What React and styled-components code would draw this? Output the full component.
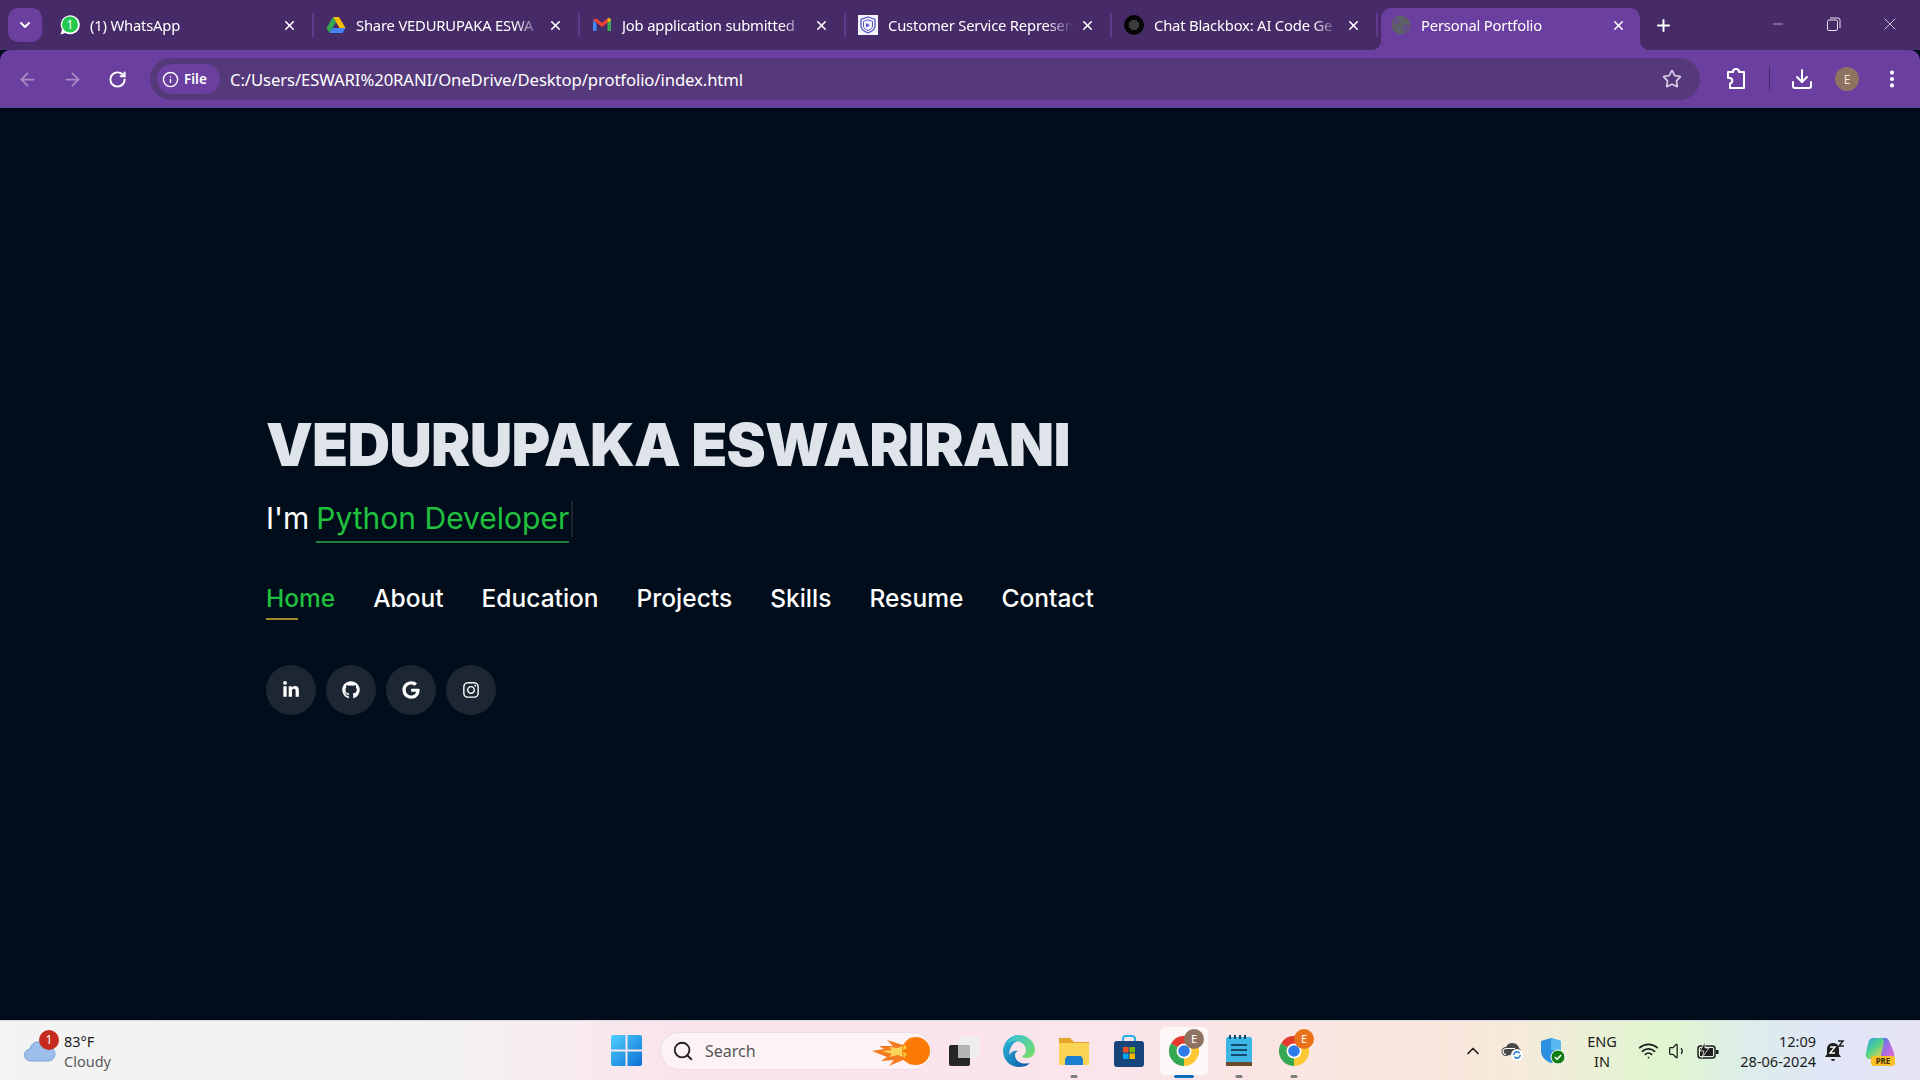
import { createGlobalStyle, styled } from 'styled-components';
import {
  ArrowLeft, ArrowRight, RotateCw, Info, Star, Download, EllipsisVertical, X, Plus, Minus,
  ChevronDown, ChevronUp, Search, Wifi, Volume1,
} from 'lucide-react';
import { FaLinkedinIn, FaGithub, FaGoogle, FaInstagram } from 'react-icons/fa';

const GlobalStyle = createGlobalStyle`
  * { box-sizing: border-box; }
  html, body { margin: 0; padding: 0; height: 100%; overflow: hidden; }
  body { background: #010d1b; font-family: "Noto Sans", "Open Sans", sans-serif; }
`;

const Screen = styled.div`
  width: 1920px;
  height: 1080px;
  display: flex;
  flex-direction: column;
  overflow: hidden;
`;

/* browser chrome */
const TabStrip = styled.div`
  height: 50px;
  background: #472b68;
  display: flex;
  align-items: flex-end;
  padding-left: 8px;
  color: #fff;
`;

const TabSearch = styled.div`
  width: 34px;
  height: 34px;
  margin-bottom: 8px;
  margin-right: 6px;
  border-radius: 10px;
  background: #6b3fa0;
  display: flex;
  align-items: center;
  justify-content: center;
`;

const Tab = styled.div`
  width: 266px;
  height: 42px;
  display: flex;
  align-items: center;
  padding-left: 12px;
  padding-bottom: 8px;
`;

const ActiveTab = styled.div`
  position: relative;
  width: 259px;
  height: 42px;
  margin-left: 3px;
  padding-left: 10px;
  padding-bottom: 8px;
  display: flex;
  align-items: center;
  background: #6b3fa0;
  border-radius: 10px 10px 0 0;

  &::before, &::after {
    content: "";
    position: absolute;
    bottom: 0;
    width: 10px;
    height: 10px;
  }
  &::before {
    left: -10px;
    background: radial-gradient(circle at 0 0, transparent 10px, #6b3fa0 10.5px);
  }
  &::after {
    right: -10px;
    background: radial-gradient(circle at 100% 0, transparent 10px, #6b3fa0 10.5px);
  }
`;

const Favicon = styled.div`
  width: 20px;
  height: 20px;
  flex: none;
  display: flex;
  align-items: center;
  justify-content: center;
`;

const TabTitle = styled.span`
  flex: 1;
  min-width: 0;
  margin-left: 10px;
  font-size: 14.8px;
  letter-spacing: -0.2px;
  white-space: nowrap;
  overflow: hidden;
  mask-image: linear-gradient(to right, #000 86%, transparent 100%);
`;

const TabClose = styled.div`
  width: 20px;
  height: 20px;
  flex: none;
  margin-left: 4px;
  margin-right: ${(p) => p.$right}px;
  display: flex;
  align-items: center;
  justify-content: center;
`;

const TabDivider = styled.div`
  width: 2px;
  height: 24px;
  flex: none;
  background: #5f3a8f;
`;

const NewTab = styled.div`
  margin-left: 14px;
  height: 42px;
  padding-bottom: 8px;
  display: flex;
  align-items: center;
`;

const WindowControls = styled.div`
  margin-left: auto;
  height: 50px;
  display: flex;
  align-items: center;
  padding-right: 2px;
  padding-bottom: 2px;
`;

const WindowButton = styled.div`
  width: 56px;
  display: flex;
  justify-content: center;
  color: #e8e0f0;
`;

const ToolBar = styled.div`
  height: 58px;
  background: #6b3fa0;
  border-radius: 10px 10px 0 0;
  border-bottom: 1px solid #4f4a8c;
  display: flex;
  align-items: center;
  padding-left: 9px;
  padding-top: 1px;
  color: #fff;
`;

const NavIcon = styled.div`
  width: 36px;
  height: 36px;
  margin-right: ${(p) => p.$gap || 9}px;
  display: flex;
  align-items: center;
  justify-content: center;
  color: ${(p) => (p.$dim ? '#a68fc4' : '#fff')};
`;

const Omnibox = styled.div`
  width: 1550px;
  height: 42px;
  margin-left: 6px;
  border-radius: 21px;
  background: #56397a;
  display: flex;
  align-items: center;
  padding: 0 18px 0 7px;
`;

const FileChip = styled.div`
  height: 30px;
  width: 63px;
  border-radius: 15px;
  background: #6b3fa0;
  display: flex;
  align-items: center;
  gap: 5px;
  padding-left: 5px;
  font-size: 13.5px;
  font-weight: 600;
`;

const Url = styled.span`
  margin-left: 10px;
  font-size: 16.7px;
  letter-spacing: -0.1px;
  flex: 1;
`;

const ToolDivider = styled.div`
  width: 1px;
  height: 24px;
  background: #472b68;
  margin: 0 20px 0 21px;
`;

const ToolIcons = styled.div`
  display: flex;
  align-items: center;
  margin-left: 24px;
`;

const Avatar = styled.div`
  width: 24px;
  height: 24px;
  margin: 0 22px 0 21px;
  border-radius: 50%;
  background: #8e7460;
  color: #f2e6dc;
  font-size: 12px;
  display: flex;
  align-items: center;
  justify-content: center;
`;

/* portfolio page */
const Hero = styled.main`
  flex: 1;
  background: #010d1b;
  padding: 301px 0 0 266px;
  display: flex;
  flex-direction: column;
  align-items: flex-start;
`;

const Name = styled.h1`
  margin: 0;
  font-family: "Inter", sans-serif;
  font-size: 59px;
  font-weight: 900;
  line-height: 72px;
  color: #dfe3ea;
  letter-spacing: -0.8px;
  white-space: nowrap;
`;

const Role = styled.div`
  margin-top: 16px;
  display: flex;
  font-family: "Inter", sans-serif;
  font-size: 30px;
  line-height: 42px;
  color: #fff;
`;

const Typed = styled.span`
  margin-left: 7px;
  padding-bottom: 2px;
  color: #1fc13f;
  border-bottom: 2px solid #1f7f38;
`;

const Cursor = styled.span`
  width: 2px;
  height: 36px;
  margin: 4px 0 0 2px;
  background: #1b2530;
`;

const NavRow = styled.nav`
  margin-top: 37px;
  display: flex;
  gap: 38px;
`;

const NavLink = styled.a`
  position: relative;
  font-family: "Inter", sans-serif;
  font-size: 24.5px;
  font-weight: 500;
  line-height: 36px;
  color: ${(p) => (p.$active ? '#1fc13f' : '#fff')};

  &::after {
    content: "";
    display: ${(p) => (p.$active ? 'block' : 'none')};
    position: absolute;
    left: 0;
    bottom: -4px;
    width: 32px;
    height: 2px;
    background: #a3872e;
  }
`;

const Socials = styled.div`
  margin-top: 49px;
  display: flex;
  gap: 10px;
`;

const SocialLink = styled.a`
  width: 50px;
  height: 50px;
  border-radius: 50%;
  background: #1c2733;
  color: #fff;
  font-size: 18px;
  display: flex;
  align-items: center;
  justify-content: center;
`;

/* windows taskbar */
const TaskBar = styled.footer`
  height: 60px;
  border-top: 1px solid #d9dbe0;
  background: linear-gradient(90deg, #f3f3f3 0%, #f4f1f2 24%, #fbe3ec 36%, #fbe4ea 58%, #fae6dc 74%, #f6eadc 79%, #dff6cf 87%, #dcedea 91%, #e0e6f6 95%, #e6e4f4 100%);
  display: flex;
  align-items: center;
  color: #1c1c1c;
`;

const Weather = styled.div`
  width: 599px;
  padding-left: 24px;
  display: flex;
  align-items: center;
  gap: 8px;
`;

const WeatherIcon = styled.div`
  position: relative;
  width: 32px;
  height: 36px;
  display: flex;
  align-items: center;
`;

const WeatherBadge = styled.span`
  position: absolute;
  right: -3px;
  top: -3px;
  width: 20px;
  height: 20px;
  border-radius: 50%;
  background: #c42b1c;
  color: #fff;
  font-size: 12px;
  display: flex;
  align-items: center;
  justify-content: center;
`;

const WeatherText = styled.div`
  font-size: 14.5px;
  line-height: 20px;
  & span { display: block; color: #5b5b5b; }
`;

const TaskCell = styled.div`
  position: relative;
  width: 55px;
  height: 60px;
  display: flex;
  align-items: center;
  justify-content: center;
`;

const ActiveBox = styled.div`
  width: 48px;
  height: 48px;
  border-radius: 5px;
  background: rgba(255, 255, 255, 0.7);
  display: flex;
  align-items: center;
  justify-content: center;
`;

const Indicator = styled.span`
  position: absolute;
  left: 50%;
  bottom: 3px;
  width: ${(p) => (p.$active ? 20 : 7)}px;
  height: 3px;
  transform: translateX(-50%);
  border-radius: 2px;
  background: ${(p) => (p.$active ? '#0f6cbd' : '#7d7d7d')};
`;

const CornerBadge = styled.span`
  position: absolute;
  right: 7px;
  top: 8px;
  width: 20px;
  height: 20px;
  border-radius: 50%;
  background: ${(p) => p.$color};
  color: #fff;
  font-size: 11px;
  display: flex;
  align-items: center;
  justify-content: center;
`;

const SearchBox = styled.div`
  width: 272px;
  height: 38px;
  margin: 0 4px 0 6px;
  border-radius: 19px;
  background: #fdf3f6;
  border: 1px solid #eadde2;
  display: flex;
  align-items: center;
  padding-left: 11px;
  font-size: 16px;
  color: #555;
  gap: 11px;
  & svg:last-child { margin-left: auto; margin-right: 1px; }
`;

const Tray = styled.div`
  margin-left: auto;
  padding-right: 14px;
  display: flex;
  align-items: center;
`;

const TrayCell = styled.div`
  width: ${(p) => p.$w}px;
  display: flex;
  align-items: center;
  justify-content: center;
  text-align: center;
  font-size: 14.5px;
  line-height: 20px;
  color: #1c1c1c;
`;

const Clock = styled.div`
  width: 91px;
  text-align: right;
  font-size: 14.5px;
  line-height: 20px;
  white-space: nowrap;
  display: flex;
  flex-direction: column;
  align-items: flex-end;
`;

/* drawn icons */
const Whatsapp = () => (
  <svg width="20" height="20" viewBox="0 0 20 20">
    <path d="M0.500 19.500l1.500-5A9.500 9.500 0 1 1 5.500 18z" fill="#fff" />
    <circle cx="10" cy="9.500" r="8" fill="#25c94f" />
    <text x="10" y="13.800" textAnchor="middle" fontSize="12" fontFamily="Noto Sans" fill="#fff">1</text>
  </svg>
);

const Drive = () => (
  <svg width="20" height="20" viewBox="0 0 20 20">
    <path d="M7 2h6l6.500 11h-6z" fill="#fbbc04" />
    <path d="M7 2L.5 13l3 5L10 7z" fill="#34a853" />
    <path d="M3.500 18h13l3-5H6.500z" fill="#4285f4" />
  </svg>
);

const Gmail = () => (
  <svg width="20" height="20" viewBox="0 0 20 20">
    <path d="M1 5v11h3.500V8.500z" fill="#4285f4" />
    <path d="M19 5v11h-3.500V8.500z" fill="#34a853" />
    <path d="M1 5l9 7 5.500-4.300V3.500L10 7.700 4 3.200z" fill="#ea4335" />
    <path d="M15.500 3.500V8L19 5.500c0-2-2-3.300-3.500-2z" fill="#fbbc04" />
  </svg>
);

const ShieldMark = () => (
  <svg width="20" height="20" viewBox="0 0 20 20">
    <rect width="20" height="20" fill="#f4f4fb" />
    <path d="M10 2l7 2.500v6.500c0 3-3 5.500-7 7-4-1.500-7-4-7-7V4.500z" fill="none" stroke="#5a55c8" strokeWidth="1.300" />
    <path d="M10 4.800l4.500 1.600v4.600c0 2-2 3.600-4.500 4.600-2.500-1-4.500-2.600-4.500-4.600V6.400z" fill="none" stroke="#5a55c8" strokeWidth="1" />
    <path d="M8 8l4 2.300-4 2.300z" fill="#5a55c8" />
  </svg>
);

const Blackbox = () => (
  <svg width="20" height="20" viewBox="0 0 20 20">
    <circle cx="10" cy="10" r="10" fill="#050505" />
    {[-4, -2, 0, 2, 4].flatMap((x) =>
      [-4, -2, 0, 2, 4].map((y) =>
        x * x + y * y < 22 ? <circle key={`${x}${y}`} cx={10 + x} cy={10 + y} r="0.7" fill="#9b9b9b" /> : null
      )
    )}
  </svg>
);

const Globe = () => (
  <svg width="20" height="20" viewBox="0 0 20 20">
    <circle cx="10" cy="10" r="9.500" fill="#5f5f68" />
    <path d="M5 3c3 1 4 3 2.500 5S3 9 1.500 8M12 10c3-1 6 0 7 2-1 3-3 5-5 6-2-3-3-6-2-8zM12 1c1 2 3 3 6 3" fill="#6b3fa0" opacity=".55" />
  </svg>
);

const Puzzle = () => (
  <svg width="24" height="24" viewBox="0 0 24 24" fill="none" stroke="#fff" strokeWidth="2" strokeLinejoin="round">
    <path d="M4 5h5a3 3 0 0 1 6 0h5v16H6v-4.500a2.800 2.800 0 0 0 0-5.500H4z" />
  </svg>
);

const RestoreIcon = () => (
  <svg width="14" height="14" viewBox="0 0 14 14" fill="none" stroke="#e8e0f0" strokeWidth="1">
    <rect x="0.500" y="3" width="10" height="10.500" rx="1.500" />
    <path d="M3 1h8a2 2 0 0 1 2 2v8" />
  </svg>
);

const Cloud = () => (
  <svg width="32" height="22" viewBox="0 0 32 22">
    <path d="M7 21a6 6 0 0 1-1-12 9 9 0 0 1 17-2 7 7 0 0 1 2 14z" fill="#9dbdea" stroke="#7ea3dc" />
  </svg>
);

const WindowsLogo = () => (
  <svg width="31" height="31" viewBox="0 0 31 31">
    <defs>
      <linearGradient id="win" x1="0" y1="0" x2="1" y2="1">
        <stop offset="0" stopColor="#4fd0fb" />
        <stop offset="1" stopColor="#0a6fd6" />
      </linearGradient>
    </defs>
    <path d="M0 2a2 2 0 0 1 2-2h12.500v14.500H0zM16.500 0H29a2 2 0 0 1 2 2v12.500H16.500zM0 16.500h14.500V31H2a2 2 0 0 1-2-2zM16.500 16.500H31V29a2 2 0 0 1-2 2H16.500z" fill="url(#win)" />
  </svg>
);

const Fire = () => (
  <svg width="58" height="32" viewBox="0 0 58 32">
    <path d="M0 16l12-2-5-3 14 0-6-6 16 5 8-8v28l-8-5-14 6 5-6-13 1 6-4z" fill="#f47a1f" />
    <path d="M10 16l10-1-3-3 9 1 8-4v14l-8-3-9 2 3-3z" fill="#fbd45b" />
    <circle cx="44" cy="16" r="14" fill="#fb7a05" />
    <path d="M38 4l-6 5 3 4-5 3 5 3-3 4 6 5c-5-3-7-7-7-12s2-9 7-12z" fill="#f9c33c" />
  </svg>
);

const TaskView = () => (
  <svg width="30" height="30" viewBox="0 0 30 30">
    <rect x="9" y="1" width="21" height="21" rx="2" fill="#eeeeee" />
    <rect x="0" y="9" width="21" height="21" rx="2" fill="#262626" />
    <rect x="9" y="9" width="12" height="13" fill="#b5b5b5" />
  </svg>
);

const Edge = () => (
  <svg width="32" height="32" viewBox="0 0 32 32">
    <defs>
      <linearGradient id="edgeA" x1="0" y1="0" x2="1" y2="1">
        <stop offset="0" stopColor="#2ebfdc" />
        <stop offset="1" stopColor="#0b53a8" />
      </linearGradient>
      <linearGradient id="edgeB" x1="0" y1="0" x2="1" y2="1">
        <stop offset="0" stopColor="#37c0e0" />
        <stop offset="1" stopColor="#7be05e" />
      </linearGradient>
    </defs>
    <path d="M16 0C7 0 1 7 0 15c0 10 7 17 16 17 4 0 8-1 11-4-7 2-15-1-15-8 0-2 1-3 3-4-4-1-7 1-9 4C7 10 12 6 16 6z" fill="url(#edgeA)" />
    <path d="M16 0c9 0 16 7 16 15 0 5-4 8-8 8-3 0-5-1-5-2 3-1 4-3 4-6 0-5-5-9-11-9-3 0-6 1-8 4C6 4 10 0 16 0z" fill="url(#edgeB)" />
  </svg>
);

const Folder = () => (
  <svg width="32" height="30" viewBox="0 0 32 30">
    <path d="M1 2h11l4 4h15v5H1z" fill="#e5a52a" />
    <path d="M1 7h30v22H1z" fill="#fcd453" />
    <path d="M9 20h14l2 3v6H7v-6z" fill="#1b7fd0" />
  </svg>
);

const Store = () => (
  <svg width="30" height="32" viewBox="0 0 30 32">
    <path d="M9 6V4a3 3 0 0 1 3-3h6a3 3 0 0 1 3 3v2" fill="none" stroke="#2ab0e8" strokeWidth="2" />
    <rect x="0" y="6" width="30" height="26" rx="3" fill="#16457c" />
    <rect x="9" y="12" width="5.500" height="5.500" fill="#f25022" />
    <rect x="15.500" y="12" width="5.500" height="5.500" fill="#7fba00" />
    <rect x="9" y="18.500" width="5.500" height="5.500" fill="#00a4ef" />
    <rect x="15.500" y="18.500" width="5.500" height="5.500" fill="#ffb900" />
  </svg>
);

const Chrome = () => (
  <svg width="30" height="30" viewBox="0 0 30 30">
    <path d="M15 15L2 7.500A15 15 0 0 1 28 7.500z" fill="#e33b2e" />
    <path d="M15 15L28 7.500A15 15 0 0 1 15 30z" fill="#fcc934" />
    <path d="M15 15V30A15 15 0 0 1 2 7.500z" fill="#34a853" />
    <circle cx="15" cy="15" r="7.500" fill="#fff" />
    <circle cx="15" cy="15" r="5.800" fill="#2f7bea" />
  </svg>
);

const Notepad = () => (
  <svg width="28" height="34" viewBox="0 0 28 34">
    <rect x="1" y="3" width="26" height="28" rx="2" fill="#3db6e6" />
    <rect x="1" y="28" width="26" height="4" fill="#6b4a2e" />
    <path d="M5 1v4M10 1v4M15 1v4M20 1v4" stroke="#17486b" strokeWidth="2" />
    <path d="M6 11h16M6 16h16M6 21h16" stroke="#164a70" strokeWidth="2" />
  </svg>
);

const CloudSync = () => (
  <svg width="24" height="22" viewBox="0 0 24 22">
    <path d="M5 16a4.500 4.500 0 0 1 0-9 7 7 0 0 1 13 1 4 4 0 0 1 2 4" fill="#4a4a4a" />
    <path d="M5 14.500a3 3 0 0 1 0-6h9" fill="none" stroke="#fff" strokeWidth="1.200" />
    <circle cx="16" cy="15" r="6" fill="#fff" />
    <path d="M12.800 15a3.200 3.200 0 0 1 5.800-1.800M19.200 15a3.200 3.200 0 0 1-5.800 1.800" fill="none" stroke="#1e78d2" strokeWidth="1.500" />
  </svg>
);

const DefenderShield = () => (
  <svg width="26" height="28" viewBox="0 0 26 28">
    <path d="M11 1l10 3v10c0 6-5 10-10 12C6 24 1 20 1 14V4z" fill="#2c8fe0" />
    <path d="M11 1l10 3v9H11z" fill="#58b8f0" />
    <circle cx="18" cy="20" r="7" fill="#107c10" stroke="#fff" />
    <path d="M14.800 20l2.300 2.300 4-4.300" fill="none" stroke="#fff" strokeWidth="1.600" />
  </svg>
);

const Battery = () => (
  <svg width="22" height="18" viewBox="0 0 22 18">
    <rect x="1" y="4" width="17" height="12" rx="2.500" fill="none" stroke="#1c1c1c" strokeWidth="1.500" />
    <rect x="3" y="6" width="13" height="8" fill="#1c1c1c" />
    <path d="M19 8h2.500v4H19z" fill="#1c1c1c" />
    <path d="M8 0L3 9h4l-2 7 7-10H8z" fill="#1c1c1c" stroke="#f0f4e4" strokeWidth="0.800" />
  </svg>
);

const SleepBell = () => (
  <svg width="20" height="22" viewBox="0 0 20 22">
    <path d="M8 3c4 0 6 3 6 6v5l2 3H0l2-3V9c0-3 2-6 6-6z" fill="#1c1c1c" />
    <path d="M6 19h4a2 2 0 0 1-4 0z" fill="#1c1c1c" />
    <path d="M5 7h5L5 13h5" fill="none" stroke="#fff" strokeWidth="1.400" />
    <path d="M13 1h5l-4 5h5" fill="none" stroke="#1c1c1c" strokeWidth="1.400" />
  </svg>
);

const Copilot = () => (
  <svg width="30" height="30" viewBox="0 0 30 30">
    <defs>
      <linearGradient id="copA" x1="0" y1="0" x2="0.800" y2="1">
        <stop offset="0" stopColor="#2e9fe8" />
        <stop offset="0.500" stopColor="#4fd08a" />
        <stop offset="1" stopColor="#f5d34a" />
      </linearGradient>
      <linearGradient id="copB" x1="0" y1="0" x2="1" y2="1">
        <stop offset="0" stopColor="#3d7fe8" />
        <stop offset="0.600" stopColor="#b86ae0" />
        <stop offset="1" stopColor="#e86ad0" />
      </linearGradient>
    </defs>
    <path d="M15 2h5c3 0 4 2 5 5l4 10c1 4-1 6-4 6h-8c-2 0-3-1-2-4z" fill="url(#copB)" />
    <path d="M9 2c-4 0-5 2-6 6L1 17c-1 4 1 6 4 6h7c2 0 3-1 4-4l3-13c0-2-1-4-3-4z" fill="url(#copA)" />
    <rect x="6" y="20" width="24" height="10" rx="3" fill="#f6c026" />
    <text x="18" y="28" textAnchor="middle" fontSize="8" fontWeight="700" fontFamily="Noto Sans" fill="#3a2a00">PRE</text>
  </svg>
);

const tabs = [
  { title: '(1) WhatsApp', icon: <Whatsapp /> },
  { title: 'Share VEDURUPAKA ESWA', icon: <Drive /> },
  { title: 'Job application submitted', icon: <Gmail /> },
  { title: 'Customer Service Represen', icon: <ShieldMark /> },
  { title: 'Chat Blackbox: AI Code Ge', icon: <Blackbox /> },
];

const links = ['Home', 'About', 'Education', 'Projects', 'Skills', 'Resume', 'Contact'];

const socials = [<FaLinkedinIn key="in" />, <FaGithub key="gh" />, <FaGoogle key="g" />, <FaInstagram key="ig" />];

const App = () => {
  return (
    <Screen>
      <GlobalStyle />
      <TabStrip>
        <TabSearch><ChevronDown size={16} strokeWidth={3} /></TabSearch>
        {tabs.map((t) => (
          <Tab key={t.title}>
            <Favicon>{t.icon}</Favicon>
            <TabTitle>{t.title}</TabTitle>
            <TabClose $right={13}><X size={15} strokeWidth={2.5} /></TabClose>
            <TabDivider />
          </Tab>
        ))}
        <ActiveTab>
          <Favicon><Globe /></Favicon>
          <TabTitle>Personal Portfolio</TabTitle>
          <TabClose $right={12}><X size={15} strokeWidth={2.5} /></TabClose>
        </ActiveTab>
        <NewTab><Plus size={19} strokeWidth={2.5} /></NewTab>
        <WindowControls>
          <WindowButton><Minus size={16} strokeWidth={1} /></WindowButton>
          <WindowButton><RestoreIcon /></WindowButton>
          <WindowButton><X size={20} strokeWidth={1} /></WindowButton>
        </WindowControls>
      </TabStrip>

      <ToolBar>
        <NavIcon $dim><ArrowLeft size={21} /></NavIcon>
        <NavIcon $dim><ArrowRight size={21} /></NavIcon>
        <NavIcon $gap={0}><RotateCw size={19} strokeWidth={2.5} /></NavIcon>
        <Omnibox>
          <FileChip><Info size={17} strokeWidth={2} />File</FileChip>
          <Url>C:/Users/ESWARI%20RANI/OneDrive/Desktop/protfolio/index.html</Url>
          <Star size={20} color="#d8d0e4" strokeWidth={2} />
        </Omnibox>
        <ToolIcons>
          <Puzzle />
          <ToolDivider />
          <Download size={24} strokeWidth={2} />
          <Avatar>E</Avatar>
          <EllipsisVertical size={22} strokeWidth={2.5} />
        </ToolIcons>
      </ToolBar>

      <Hero>
        <Name>VEDURUPAKA ESWARIRANI</Name>
        <Role>
          I'm<Typed>Python Developer</Typed><Cursor />
        </Role>
        <NavRow>
          {links.map((l, i) => (
            <NavLink key={l} $active={i === 0}>{l}</NavLink>
          ))}
        </NavRow>
        <Socials>
          {socials.map((s) => (
            <SocialLink key={s.key}>{s}</SocialLink>
          ))}
        </Socials>
      </Hero>

      <TaskBar>
        <Weather>
          <WeatherIcon>
            <Cloud />
            <WeatherBadge>1</WeatherBadge>
          </WeatherIcon>
          <WeatherText>83°F<span>Cloudy</span></WeatherText>
        </Weather>
        <TaskCell><WindowsLogo /></TaskCell>
        <SearchBox>
          <Search size={22} color="#222" strokeWidth={2} />
          Search
          <Fire />
        </SearchBox>
        <TaskCell><TaskView /></TaskCell>
        <TaskCell><Edge /></TaskCell>
        <TaskCell><Folder /><Indicator /></TaskCell>
        <TaskCell><Store /></TaskCell>
        <TaskCell>
          <ActiveBox><Chrome /></ActiveBox>
          <CornerBadge $color="#8e7460">E</CornerBadge>
          <Indicator $active />
        </TaskCell>
        <TaskCell><Notepad /><Indicator /></TaskCell>
        <TaskCell>
          <Chrome />
          <CornerBadge $color="#e8711a">E</CornerBadge>
          <Indicator />
        </TaskCell>
        <Tray>
          <TrayCell $w={40}><ChevronUp size={20} /></TrayCell>
          <TrayCell $w={40}><CloudSync /></TrayCell>
          <TrayCell $w={40}><DefenderShield /></TrayCell>
          <TrayCell $w={58}>ENG<br />IN</TrayCell>
          <TrayCell $w={34}><Wifi size={21} /></TrayCell>
          <TrayCell $w={26}><Volume1 size={20} strokeWidth={1.5} /></TrayCell>
          <TrayCell $w={34}><Battery /></TrayCell>
          <Clock><span>12:09</span><span>28-06-2024</span></Clock>
          <TrayCell $w={38}><SleepBell /></TrayCell>
          <TrayCell $w={52}><Copilot /></TrayCell>
        </Tray>
      </TaskBar>
    </Screen>
  );
};

export default App;
